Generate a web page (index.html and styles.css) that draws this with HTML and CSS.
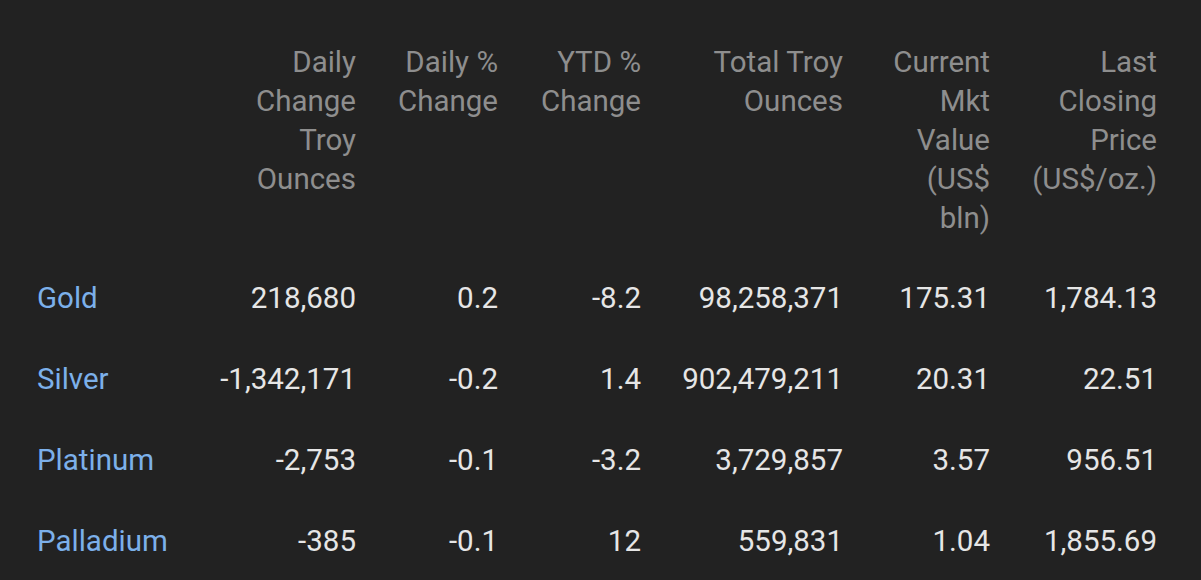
FILE: index.html
```html
<!DOCTYPE html>
<html>
<head>
<meta charset="utf-8">
<link rel="stylesheet" href="styles.css">
</head>
<body>
<div class="wrap">
<table class="etf">
  <colgroup>
    <col class="c-name"><col class="c-d1"><col class="c-d2"><col class="c-ytd"><col class="c-total"><col class="c-mkt"><col class="c-last">
  </colgroup>
  <thead>
    <tr>
      <th class="name"></th>
      <th class="d1">Daily Change Troy Ounces</th>
      <th>Daily % Change</th>
      <th>YTD % Change</th>
      <th>Total Troy Ounces</th>
      <th class="mkt">Current Mkt Value (US$ bln)</th>
      <th class="last">Last Closing Price (US$/oz.)</th>
    </tr>
  </thead>
  <tbody>
    <tr><td class="name">Gold</td><td>218,680</td><td>0.2</td><td>-8.2</td><td>98,258,371</td><td>175.31</td><td>1,784.13</td></tr>
    <tr><td class="name">Silver</td><td>-1,342,171</td><td>-0.2</td><td>1.4</td><td>902,479,211</td><td>20.31</td><td>22.51</td></tr>
    <tr><td class="name">Platinum</td><td>-2,753</td><td>-0.1</td><td>-3.2</td><td>3,729,857</td><td>3.57</td><td>956.51</td></tr>
    <tr><td class="name">Palladium</td><td>-385</td><td>-0.1</td><td>12</td><td>559,831</td><td>1.04</td><td>1,855.69</td></tr>
  </tbody>
</table>
</div>
</body>
</html>
```

FILE: styles.css
```css
html, body {
  margin: 0;
  padding: 0;
  background: #222222;
  overflow: hidden;
}
.wrap {
  padding-top: 43px;
}
.etf {
  border-collapse: collapse;
  table-layout: fixed;
  width: 1157px;
  font-family: Roboto, "Liberation Sans", sans-serif;
  font-size: 29.5px;
  line-height: 39px;
}
.c-name { width: 200px; }
.c-d1 { width: 156px; }
.c-d2 { width: 142px; }
.c-ytd { width: 143px; }
.c-total { width: 202px; }
.c-mkt { width: 147px; }
.c-last { width: 167px; }
.etf th {
  color: #8e8e8e;
  font-weight: 400;
  text-align: right;
  vertical-align: top;
  padding: 0 0 20px 0;
}
.etf th.d1 { padding-left: 11px; }
.etf th.mkt { padding-left: 37px; }
.etf th.last { padding-left: 27px; }
.etf td {
  color: #e6e6e6;
  text-align: right;
  vertical-align: middle;
  height: 81px;
  padding: 0;
}
.etf td.name,
.etf th.name {
  text-align: left;
  padding-left: 37px;
}
.etf td.name {
  color: #7cb0ea;
}
```
